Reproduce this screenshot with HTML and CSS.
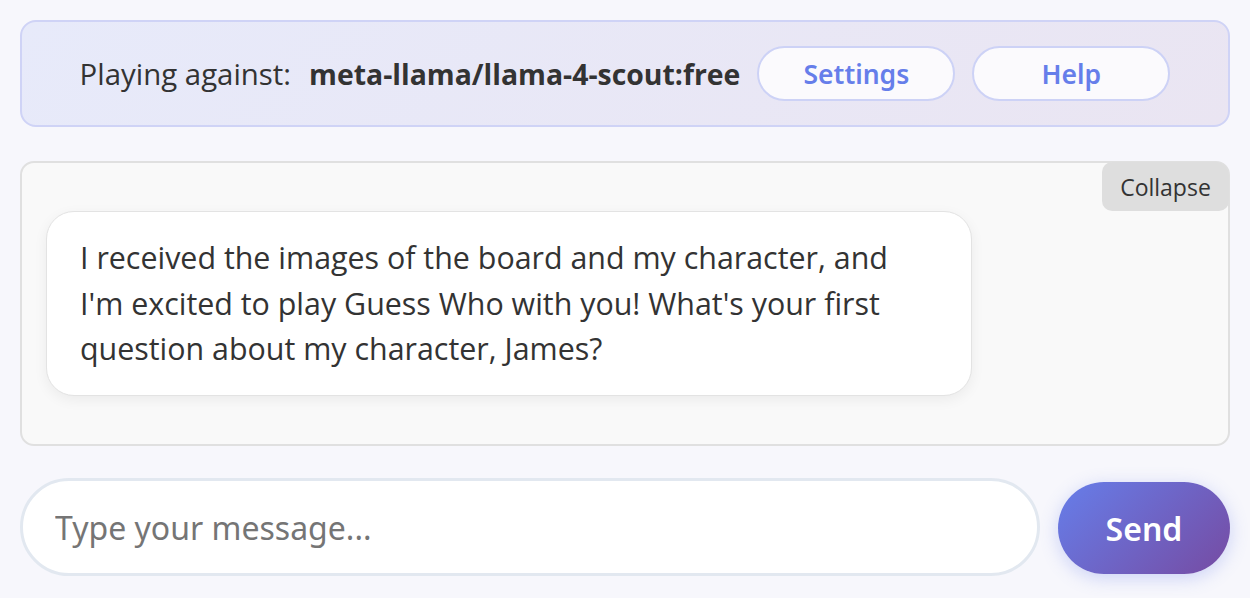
FILE: index.html
```html
<!DOCTYPE html>
<html lang="en">
<head>
<meta charset="utf-8">
<title>Guess Who</title>
<link rel="stylesheet" href="styles.css">
</head>
<body>
<div class="app">
  <header class="topbar">
    <span class="label">Playing against:</span>
    <span class="model">meta-llama/llama-4-scout:free</span>
    <button class="pill">Settings</button>
    <button class="pill">Help</button>
  </header>
  <section class="chat">
    <button class="collapse">Collapse</button>
    <div class="bubble">I received the images of the board and my character, and I'm excited to play Guess Who with you! What's your first question about my character, James?</div>
  </section>
  <form class="composer">
    <input class="input" type="text" placeholder="Type your message...">
    <button class="send" type="button">Send</button>
  </form>
</div>
</body>
</html>
```
FILE: styles.css
```css
* { box-sizing: border-box; }
html, body { margin: 0; padding: 0; }
body {
  background: #f7f7fc;
  font-family: "Open Sans", "Noto Sans", sans-serif;
  color: #333;
}
.app {
  padding: 20px;
  display: flex;
  flex-direction: column;
  gap: 34px;
}
.topbar {
  display: flex;
  align-items: center;
  justify-content: center;
  gap: 17px;
  padding: 24px 20px;
  border: 2px solid #cfd3f6;
  border-radius: 16px;
  background: linear-gradient(135deg, #e7eafa 0%, #eae5f2 100%);
}
.label {
  font-size: 29.4px;
  font-weight: 400;
  color: #333;
  margin-right: 1px;
}
.model {
  font-size: 28.4px;
  font-weight: 700;
  color: #333;
}
.pill {
  font-family: "Noto Sans", sans-serif;
  font-size: 26.5px;
  font-weight: 600;
  color: #667eea;
  background: rgba(255, 255, 255, 0.8);
  border: 2px solid #cdd2f6;
  border-radius: 30px;
  width: 198px;
  height: 55px;
  padding: 0;
}
.chat {
  position: relative;
  background: #f9f9f9;
  border: 2px solid #e0e0e0;
  border-radius: 14px;
  padding: 24px;
}
.collapse {
  position: absolute;
  top: -1px;
  right: -1px;
  width: 127px;
  height: 49px;
  border: none;
  border-radius: 10px 14px 10px 10px;
  background: #dedede;
  color: #333;
  font-family: "Open Sans", "Noto Sans", sans-serif;
  font-size: 23px;
  padding: 0;
}
.bubble {
  margin: 24px 0;
  max-width: 80%;
  background: #fff;
  border: 1px solid #e3e3e3;
  border-radius: 28px;
  padding: 23px 33px;
  font-size: 30.4px;
  line-height: 45.7px;
  color: #333;
  box-shadow: 0 4px 14px rgba(0, 0, 0, 0.06);
}
.composer {
  display: flex;
  align-items: center;
  gap: 18px;
  margin: 0;
}
.input {
  flex: 1;
  height: 98px;
  margin-top: -2px;
  border: 3px solid #e2e8f0;
  border-radius: 50px;
  background: #fff;
  padding: 0 32px;
  font-family: "Noto Sans", sans-serif;
  font-size: 32px;
  color: #333;
  outline: none;
}
.input::placeholder { color: #757575; }
.send {
  width: 172px;
  height: 92px;
  border: none;
  border-radius: 46px;
  background: linear-gradient(135deg, #667eea 0%, #764ba2 100%);
  color: #fff;
  font-family: "Noto Sans", sans-serif;
  font-size: 32px;
  font-weight: 600;
  box-shadow: 0 4px 18px rgba(102, 126, 234, 0.3);
  padding: 0;
}
```
